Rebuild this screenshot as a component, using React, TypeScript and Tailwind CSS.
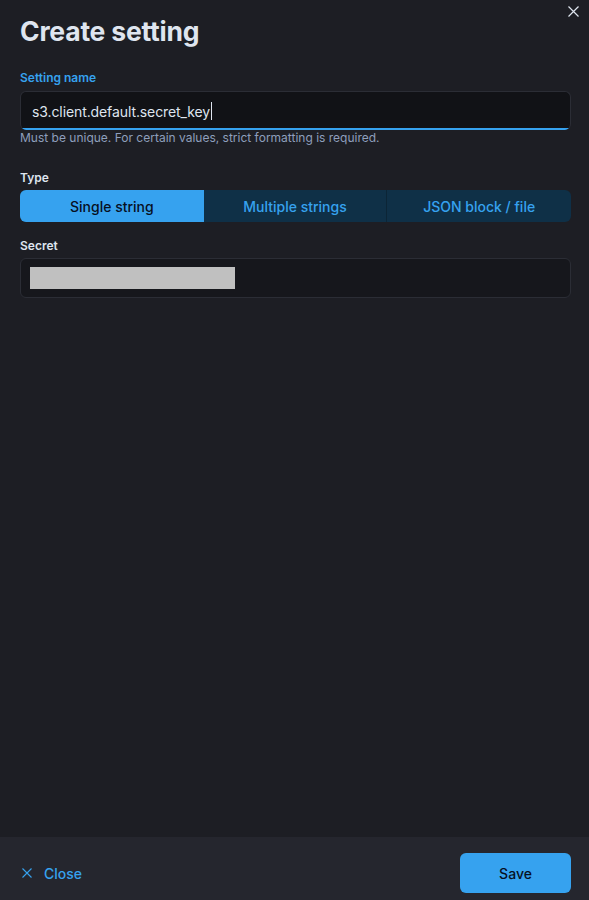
import React from "react";

export default function App() {
  return (
    <div
      className="relative w-[589px] h-[900px] bg-[#1d1e24] flex flex-col overflow-hidden"
      style={{ fontFamily: "Inter, 'Noto Sans', sans-serif" }}
    >
      <button className="absolute right-[9px] top-[4px] w-[14px] h-[14px] flex items-center justify-center text-[#dfe5ef]">
        <svg width="11" height="11" viewBox="0 0 11 11" fill="none" stroke="currentColor" strokeWidth="1.2">
          <path d="M0.5 0.5 L10.5 10.5 M10.5 0.5 L0.5 10.5" />
        </svg>
      </button>
      <div className="flex-1 pl-[20px] pr-[18px] pt-[14px]">
        <h1 className="text-[26.5px] leading-[34px] font-bold text-[#dfe5ef] tracking-[-0.2px]">Create setting</h1>
        <div className="mt-[20px]">
          <div className="text-[12px] leading-[20px] font-semibold text-[#36a2ef]">Setting name</div>
          <div className="mt-[3px] h-[39px] bg-[#111216] rounded-[6px] border border-[#2b2d35] border-b-0 relative overflow-hidden flex items-center px-[11px]">
            <span className="text-[14px] text-[#dfe5ef] tracking-[-0.1px]">s3.client.default.secret_key</span>
            <span className="inline-block w-px h-[18px] bg-[#dfe5ef] ml-[1px]"></span>
            <div className="absolute left-0 right-0 bottom-0 h-[2px] bg-[#36a2ef]"></div>
          </div>
          <div className="mt-0 text-[12px] leading-[16px] text-[#8e9fbc]">
            Must be unique. For certain values, strict formatting is required.
          </div>
        </div>
        <div className="mt-[22px]">
          <div className="text-[12px] leading-[20px] font-semibold text-[#dfe5ef]">Type</div>
          <div className="mt-[2px] h-[32px] grid grid-cols-3 rounded-[6px] overflow-hidden bg-[#0f3047]">
            <div className="bg-[#36a2ef] flex items-center justify-center text-[14px] font-medium text-[#07101f]">Single string</div>
            <div className="flex items-center justify-center text-[14px] font-medium text-[#36a2ef] border-r border-[#0c2536]">Multiple strings</div>
            <div className="flex items-center justify-center text-[14px] font-medium text-[#36a2ef]">JSON block / file</div>
          </div>
        </div>
        <div className="mt-[14px]">
          <div className="text-[12px] leading-[20px] font-semibold text-[#dfe5ef]">Secret</div>
          <div className="mt-[2px] h-[40px] bg-[#16171c] rounded-[6px] border border-[#2b2d35] flex items-center px-[9px]">
            <div className="w-[205px] h-[22px] bg-[#c0c0c0]"></div>
          </div>
        </div>
      </div>
      <div className="h-[63px] bg-[#25262e] flex items-center justify-between px-[18px] pt-[16px] pb-[7px]">
        <button className="flex items-center gap-[12px] text-[#36a2ef] text-[14px] font-medium pl-[4px]">
          <svg width="10" height="10" viewBox="0 0 10 10" fill="none" stroke="currentColor" strokeWidth="1.1">
            <path d="M0.5 0.5 L9.5 9.5 M9.5 0.5 L0.5 9.5" />
          </svg>
          Close
        </button>
        <button className="w-[111px] h-[40px] rounded-[6px] bg-[#36a2ef] text-[#07101f] text-[14px] font-medium">Save</button>
      </div>
    </div>
  );
}
